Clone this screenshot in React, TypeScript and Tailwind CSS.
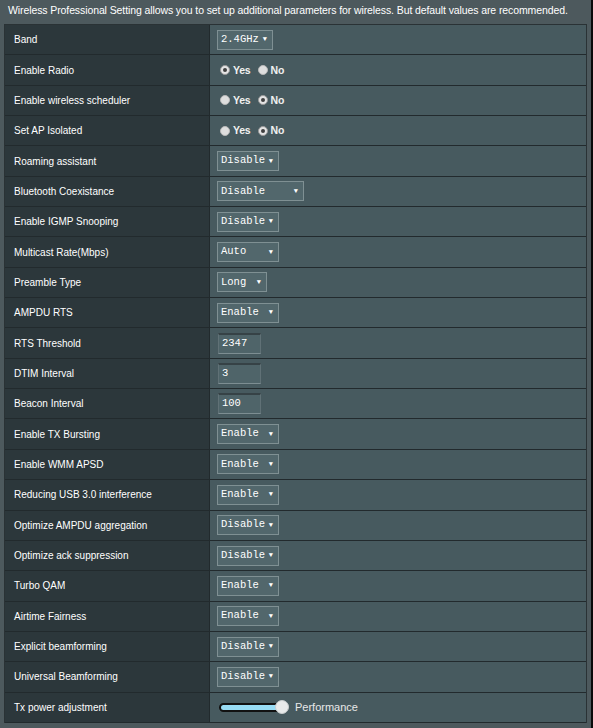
import React from "react";

type Row =
  | { label: string; kind: "select"; value: string; w: number }
  | { label: string; kind: "radio"; yes: boolean }
  | { label: string; kind: "input"; value: string }
  | { label: string; kind: "slider" };

const rows: Row[] = [
  { label: "Band", kind: "select", value: "2.4GHz", w: 56 },
  { label: "Enable Radio", kind: "radio", yes: true },
  { label: "Enable wireless scheduler", kind: "radio", yes: false },
  { label: "Set AP Isolated", kind: "radio", yes: false },
  { label: "Roaming assistant", kind: "select", value: "Disable", w: 62 },
  { label: "Bluetooth Coexistance", kind: "select", value: "Disable", w: 87 },
  { label: "Enable IGMP Snooping", kind: "select", value: "Disable", w: 62 },
  { label: "Multicast Rate(Mbps)", kind: "select", value: "Auto", w: 62 },
  { label: "Preamble Type", kind: "select", value: "Long", w: 50 },
  { label: "AMPDU RTS", kind: "select", value: "Enable", w: 62 },
  { label: "RTS Threshold", kind: "input", value: "2347" },
  { label: "DTIM Interval", kind: "input", value: "3" },
  { label: "Beacon Interval", kind: "input", value: "100" },
  { label: "Enable TX Bursting", kind: "select", value: "Enable", w: 62 },
  { label: "Enable WMM APSD", kind: "select", value: "Enable", w: 62 },
  { label: "Reducing USB 3.0 interference", kind: "select", value: "Enable", w: 62 },
  { label: "Optimize AMPDU aggregation", kind: "select", value: "Disable", w: 62 },
  { label: "Optimize ack suppression", kind: "select", value: "Disable", w: 62 },
  { label: "Turbo QAM", kind: "select", value: "Enable", w: 62 },
  { label: "Airtime Fairness", kind: "select", value: "Enable", w: 62 },
  { label: "Explicit beamforming", kind: "select", value: "Disable", w: 62 },
  { label: "Universal Beamforming", kind: "select", value: "Disable", w: 62 },
  { label: "Tx power adjustment", kind: "slider" },
];

const mono = '"Liberation Mono", "DejaVu Sans Mono", monospace';

function Radio({ on, text }: { on: boolean; text: string }) {
  return (
    <span className="flex items-center">
      {on ? (
        <span className="w-[10px] h-[10px] rounded-full bg-[#e4e4e4] border border-[#9a9a9a] flex items-center justify-center">
          <span className="w-[4px] h-[4px] rounded-full bg-[#404040]" />
        </span>
      ) : (
        <span className="w-[10px] h-[10px] rounded-full bg-[#dedede] border border-[#b8b8b8]" />
      )}
      <span className="ml-[3px] text-[10.5px] font-bold text-[#f0f0f0] leading-none tracking-[-0.2px]">{text}</span>
    </span>
  );
}

function Value({ row }: { row: Row }) {
  if (row.kind === "select") {
    return (
      <div
        className="h-[20px] flex items-center justify-between pl-[3px] pr-[5px] bg-[#52676c] border border-[#7f9093] text-white text-[10.5px]"
        style={{ width: row.w, fontFamily: mono }}
      >
        <span>{row.value}</span>
        <span className="text-[7px] leading-none">▼</span>
      </div>
    );
  }
  if (row.kind === "radio") {
    return (
      <div className="flex items-center gap-[7px] pl-[3px]">
        <Radio on={row.yes} text="Yes" />
        <Radio on={!row.yes} text="No" />
      </div>
    );
  }
  if (row.kind === "input") {
    return (
      <div
        className="ml-[1px] w-[43px] h-[21px] flex items-center pl-[3px] bg-[#4f6469] border-t-2 border-t-[#364246] border-b border-b-[#7d8e92] border-x border-x-[#607176] text-white text-[10.5px]"
        style={{ fontFamily: mono }}
      >
        {row.value}
      </div>
    );
  }
  return (
    <div className="flex items-center pl-[2px]">
      <div className="relative w-[70px] h-[14px] flex items-center">
        <div className="w-[64px] h-[9px] rounded-[5px] bg-[#97dcf4] border-2 border-[#111]" />
        <div className="absolute left-[56px] top-0 w-[14px] h-[14px] rounded-full bg-[#e8eaea] border border-[#c9cdce]" />
      </div>
      <span className="ml-[6px] text-[11px] text-[#e8e8e8]">Performance</span>
    </div>
  );
}

export default function App() {
  return (
    <div
      className="w-[593px] h-[728px] bg-[#4d595d] flex overflow-hidden"
      style={{ fontFamily: '"Liberation Sans", Arial, sans-serif' }}
    >
      <div className="flex-1 flex flex-col">
        <div className="h-[24px] pl-[8px] pt-[4px] text-[10.5px] tracking-[-0.1px] text-white leading-[13px] whitespace-nowrap">
          Wireless Professional Setting allows you to set up additional parameters for wireless. But default values are recommended.
        </div>
        <div className="mx-[4px] border-t border-x border-[#2a3235]">
          {rows.map((r) => (
            <div key={r.label} className="h-[30.35px] flex border-b border-[#222a2d]">
              <div className="w-[205px] shrink-0 bg-[#2c373b] border-r border-[#222a2d] flex items-center pl-[9px] text-[10px] text-white">
                {r.label}
              </div>
              <div className="flex-1 bg-[#475a5f] flex items-center pl-[7px]">
                <Value row={r} />
              </div>
            </div>
          ))}
        </div>
      </div>
      <div className="w-[2px] bg-[#0a0a0a]" />
    </div>
  );
}
